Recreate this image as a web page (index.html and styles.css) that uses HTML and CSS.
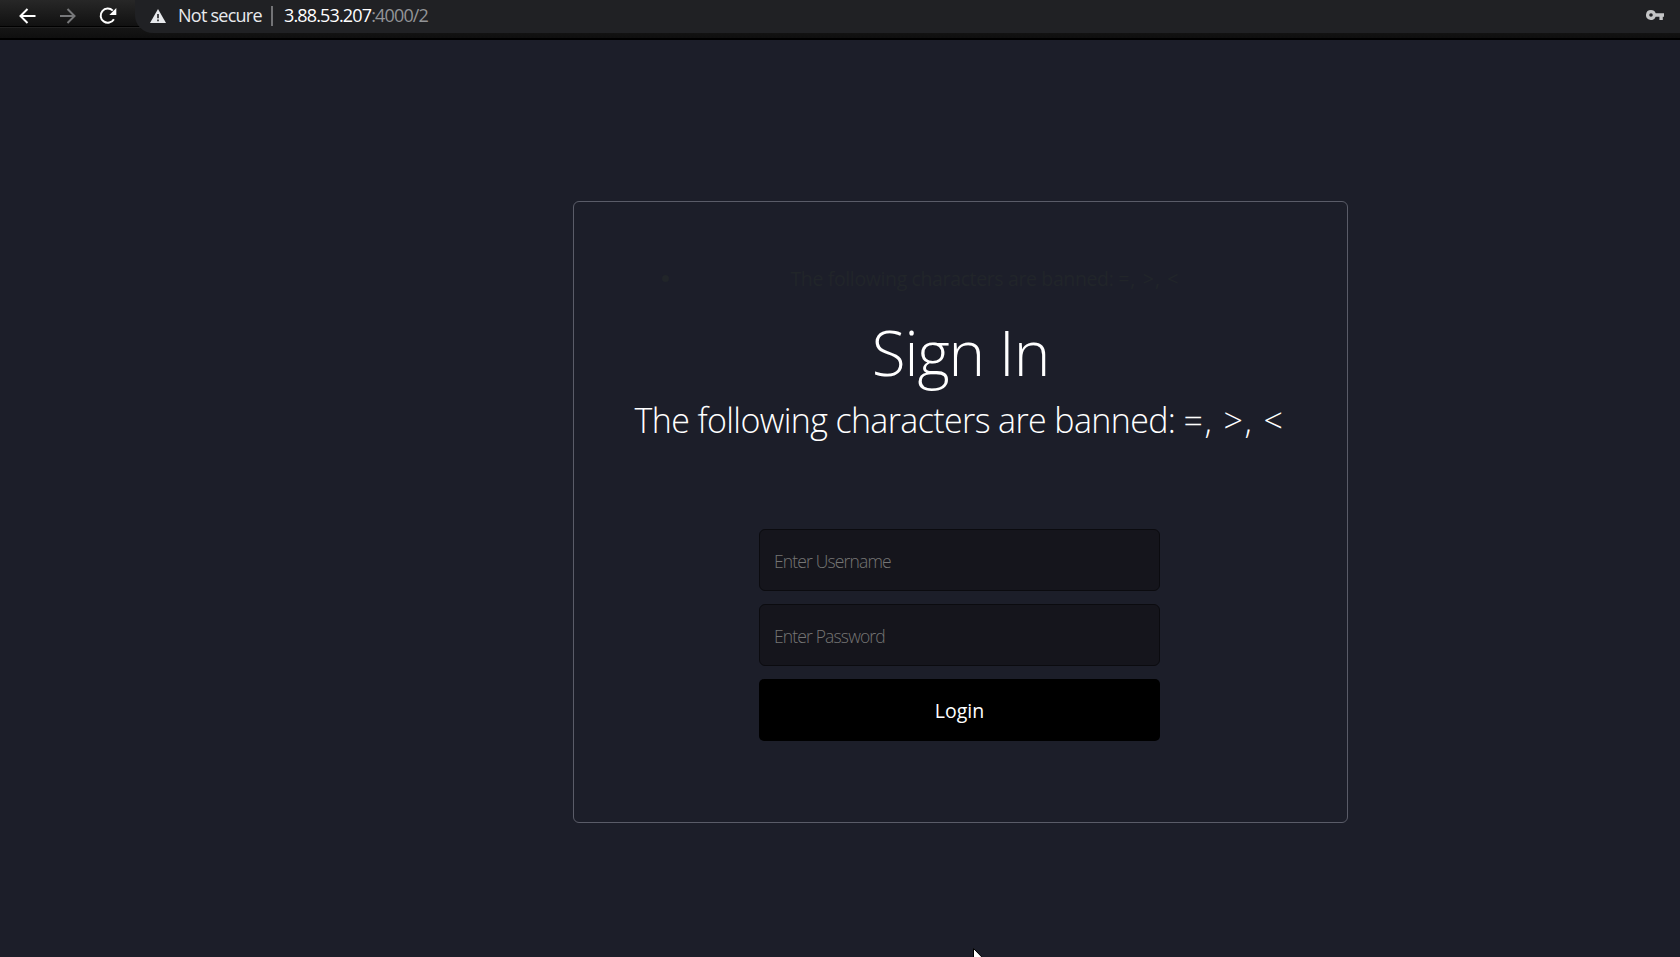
FILE: index.html
```
<!DOCTYPE html>
<html lang="en">
<head>
<meta charset="utf-8">
<title>Sign In</title>
<link rel="stylesheet" href="styles.css">
</head>
<body>
<header class="toolbar">
  <nav class="nav">
    <svg class="nav-icon" viewBox="0 0 20 20"><path d="M17.5 10H3M9.5 3L2.5 10L9.5 17" stroke="#fff"/></svg>
    <svg class="nav-icon" viewBox="0 0 20 20"><path d="M2 10H16.5M9.5 3L16.5 10L9.5 17" stroke="#77787a"/></svg>
    <svg class="nav-icon" viewBox="0 0 20 20"><path d="M15.9 13.2A7.1 7.1 0 1 1 14.8 4.6" stroke="#fff"/><path d="M18.3 2V9H11.3Z" fill="#fff" stroke="none"/></svg>
  </nav>
  <div class="omnibox">
    <svg class="warn" viewBox="0 0 16 14"><path d="M8 0L16 14H0Z" fill="#e8eaed"/><path d="M7.2 5H8.8V9.3H7.2ZM7.2 10.6H8.8V12.2H7.2Z" fill="#202124"/></svg>
    <span class="secure">Not secure</span>
    <span class="divider"></span>
    <span class="host">3.88.53.207</span><span class="path">:4000/2</span>
    <svg class="key" viewBox="0 0 18 10"><path fill-rule="evenodd" d="M5 0A5 5 0 0 1 9.7 3.3H18V6.7H16.8V10H13.4V6.7H9.7A5 5 0 1 1 5 0ZM5 3.2A1.8 1.8 0 1 0 5 6.8A1.8 1.8 0 0 0 5 3.2Z" fill="#c4c5c6"/></svg>
  </div>
</header>
<main class="page">
  <section class="card">
    <ul class="messages"><li>The following characters are banned: <span class="symbols">=, &gt;, &lt;</span></li></ul>
    <h1 class="title">Sign In</h1>
    <p class="subtitle">The following characters are banned: <span class="symbols">=, &gt;, &lt;</span></p>
    <form class="form">
      <input class="field" type="text" placeholder="Enter Username">
      <input class="field password" type="password" placeholder="Enter Password">
      <button class="login" type="button">Login</button>
    </form>
  </section>
</main>
<svg class="cursor" viewBox="0 0 16 24"><path d="M1.5 1.5V19L5.5 15.3L8.3 21.5L11 20.3L8.3 14.3H14Z" fill="#fff" stroke="#000" stroke-width="1"/></svg>
</body>
</html>
```
FILE: styles.css
```
* { box-sizing: border-box; }
body {
  margin: 0;
  height: 957px;
  overflow: hidden;
  display: flex;
  flex-direction: column;
  background: #1c1e29;
  font-family: "Open Sans", "Noto Sans", sans-serif;
}
.toolbar {
  flex: none;
  height: 40px;
  display: flex;
  align-items: flex-start;
  background: linear-gradient(#272727 0, #111 26px, #000 26px, #000 27px, #222 27px, #222 28px, #151515 28px, #0f0f0f 38px, #000 38px);
}
.nav { display: flex; gap: 20px; padding: 6px 0 0 18px; width: 135px; }
.nav-icon { width: 20px; height: 20px; fill: none; stroke-width: 2; }
.omnibox {
  flex: 1;
  height: 33px;
  display: flex;
  align-items: center;
  padding: 0 16px 3px 15px;
  border-radius: 0 0 0 18px;
  background: #202124;
  font-size: 18px;
  line-height: 24px;
}
.warn { width: 16px; height: 14px; margin: 2px 12px 0 0; }
.secure { width: 93px; color: #e8eaed; letter-spacing: -0.75px; white-space: nowrap; }
.divider { width: 2px; height: 20px; margin: 1px 11px 0 0; background: #727376; }
.host { color: #fff; letter-spacing: -0.85px; }
.path { color: #929497; letter-spacing: -0.85px; }
.key { width: 18px; height: 10px; margin-left: auto; }
.page { flex: 1; display: flex; padding: 161px 0 0 573px; align-items: flex-start; }
.card {
  width: 775px;
  height: 622px;
  padding: 60px 60px 0;
  border: 1px solid #5a5c68;
  border-radius: 6px;
  text-align: center;
  color: #fff;
  white-space: nowrap;
}
.messages {
  margin: 0 0 20px;
  padding-left: 49px;
  color: #212529;
  font-size: 19.5px;
  font-weight: 400;
  line-height: 33px;
  padding-bottom: 1px;
  letter-spacing: -0.37px;
}
.messages .symbols { letter-spacing: 1.1px; }
.title { margin: -2px 0 2px; font-size: 62px; font-weight: 300; line-height: 76px; letter-spacing: -1.1px; }
.subtitle { margin: 0 -19px 0 -21px; font-size: 34px; font-weight: 300; line-height: 56px; letter-spacing: -0.63px; }
.subtitle .symbols { letter-spacing: 1.5px; }
.form { display: flex; flex-direction: column; gap: 13px; width: 401px; margin: 81px auto 0 125px; }
.field {
  height: 62px;
  padding: 2px 14px 0;
  border: 1px solid #0b0b0f;
  border-radius: 6px;
  background: #15151c;
  color: #fff;
  font: 300 17.5px "Open Sans", "Noto Sans", sans-serif;
}
.field::placeholder { color: #757575; opacity: 1; letter-spacing: -0.85px; }
.login {
  height: 62px;
  padding: 0;
  border: 0;
  border-radius: 5px;
  background: #000;
  color: #fff;
  font: 400 19.5px "Open Sans", "Noto Sans", sans-serif;
}
.cursor { position: absolute; left: 972px; top: 947px; width: 16px; height: 24px; }
```
